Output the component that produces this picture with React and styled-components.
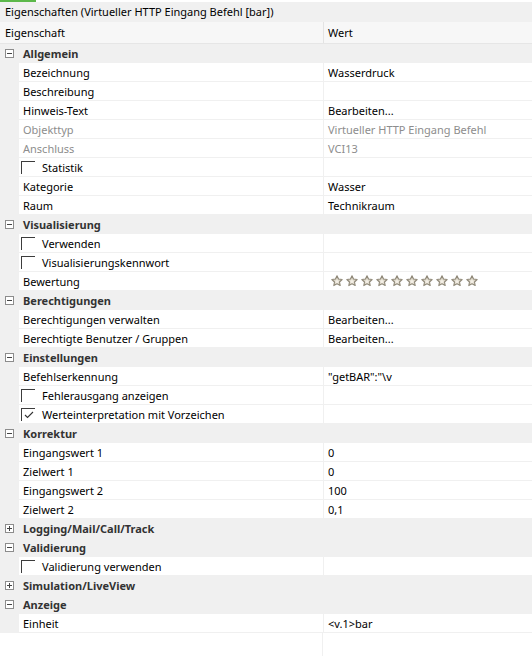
import React from "react";
import styled, { createGlobalStyle } from "styled-components";

const GlobalStyle = createGlobalStyle`
  html, body {
    margin: 0;
    padding: 0;
    background: #ffffff;
  }
  body {
    font-family: "Noto Sans", "Open Sans", sans-serif;
    font-size: 11px;
    color: #000;
  }
`;

const Panel = styled.div`
  width: 532px;
  height: 656px;
  overflow: hidden;
  display: flex;
  flex-direction: column;
  background: #fff;
`;

const Accent = styled.div`
  width: 36px;
  height: 2px;
  background: #5cb84a;
`;

const TitleBar = styled.div`
  height: 20px;
  line-height: 20px;
  padding-left: 5px;
  background: #f0f0f0;
  white-space: nowrap;
`;

const HeaderRow = styled.div`
  display: grid;
  grid-template-columns: 323px 1fr;
  height: 21px;
  background: #f7f7f7;
  border-bottom: 1px solid #e6e6e6;
`;

const HeaderCell = styled.div`
  line-height: 21px;
  padding-left: ${(p) => (p.$value ? "4px" : "5px")};
  border-left: ${(p) => (p.$value ? "1px solid #e3e3e3" : "none")};
`;

const Rows = styled.div`
  flex: 1;
  display: flex;
  flex-direction: column;
  background: linear-gradient(to right, transparent 322px, #f0f0f0 322px, #f0f0f0 323px, transparent 323px);
`;

const GroupRow = styled.div`
  display: flex;
  align-items: center;
  height: 19px;
  background: #f0f0f0;
  font-weight: 700;
  color: #333;
`;

const Expander = styled.span`
  box-sizing: border-box;
  width: 9px;
  height: 9px;
  margin: 0 9px 0 5px;
  border: 1px solid #8c8c8c;
  background: #fff;
  position: relative;
  &::before {
    content: "";
    position: absolute;
    left: 1px;
    right: 1px;
    top: 3px;
    height: 1px;
    background: #444;
  }
  &::after {
    content: "";
    display: ${(p) => (p.$collapsed ? "block" : "none")};
    position: absolute;
    top: 1px;
    bottom: 1px;
    left: 3px;
    width: 1px;
    background: #444;
  }
`;

const ItemRow = styled.div`
  display: grid;
  grid-template-columns: 19px 304px 1fr;
  height: 19px;
  color: ${(p) => (p.$disabled ? "#8d8d8d" : "#000")};
`;

const Gutter = styled.div`
  background: #f0f0f0;
`;

const NameCell = styled.div`
  display: flex;
  align-items: center;
  padding-left: 4px;
  background: #fff;
  border-bottom: 1px solid #f0f0f0;
  white-space: nowrap;
`;

const ValueCell = styled.div`
  display: flex;
  align-items: center;
  padding-left: 4px;
  background: #fff;
  border-left: 1px solid #f0f0f0;
  border-bottom: 1px solid #f0f0f0;
  white-space: nowrap;
`;

const Check = styled.span`
  box-sizing: border-box;
  width: 14px;
  height: 13px;
  margin: 0 7px 0 -2px;
  border-top: 1px solid #3c3c3c;
  border-left: 1px solid #3c3c3c;
  display: flex;
  align-items: center;
  justify-content: center;
`;

const Stars = styled.div`
  display: flex;
  gap: 3px;
  padding-left: 3px;
`;

const Star = () => (
  <svg width="12" height="12" viewBox="0 0 24 24">
    <path
      d="M12 1.5l3.1 6.6 7.2.9-5.3 5 1.4 7.1L12 17.6l-6.4 3.5 1.4-7.1-5.3-5 7.2-.9z"
      fill="#d9d3c4"
      stroke="#8f8878"
      strokeWidth="2.2"
      strokeLinejoin="round"
    />
    <path d="M12 8l1.5 3.2 3.4.4-2.5 2.4.7 3.4L12 15.7l-3.1 1.7.7-3.4-2.5-2.4 3.4-.4z" fill="#f3efe6" />
  </svg>
);

const Tick = () => (
  <svg width="10" height="8" viewBox="0 0 10 8">
    <path d="M1 4l2.5 2.5L9 1" fill="none" stroke="#333" strokeWidth="1.1" />
  </svg>
);

const groups = [
  {
    title: "Allgemein",
    items: [
      { name: "Bezeichnung", value: "Wasserdruck" },
      { name: "Beschreibung", value: "" },
      { name: "Hinweis-Text", value: "Bearbeiten..." },
      { name: "Objekttyp", value: "Virtueller HTTP Eingang Befehl", disabled: true },
      { name: "Anschluss", value: "VCI13", disabled: true },
      { name: "Statistik", check: "off" },
      { name: "Kategorie", value: "Wasser" },
      { name: "Raum", value: "Technikraum" },
    ],
  },
  {
    title: "Visualisierung",
    items: [
      { name: "Verwenden", check: "off" },
      { name: "Visualisierungskennwort", check: "off" },
      { name: "Bewertung", stars: 10 },
    ],
  },
  {
    title: "Berechtigungen",
    items: [
      { name: "Berechtigungen verwalten", value: "Bearbeiten..." },
      { name: "Berechtigte Benutzer / Gruppen", value: "Bearbeiten..." },
    ],
  },
  {
    title: "Einstellungen",
    items: [
      { name: "Befehlserkennung", value: '"getBAR":"\\v' },
      { name: "Fehlerausgang anzeigen", check: "off" },
      { name: "Werteinterpretation mit Vorzeichen", check: "on" },
    ],
  },
  {
    title: "Korrektur",
    items: [
      { name: "Eingangswert 1", value: "0" },
      { name: "Zielwert 1", value: "0" },
      { name: "Eingangswert 2", value: "100" },
      { name: "Zielwert 2", value: "0,1" },
    ],
  },
  { title: "Logging/Mail/Call/Track", collapsed: true, items: [] },
  {
    title: "Validierung",
    items: [{ name: "Validierung verwenden", check: "off" }],
  },
  { title: "Simulation/LiveView", collapsed: true, items: [] },
  {
    title: "Anzeige",
    items: [{ name: "Einheit", value: "<v.1>bar" }],
  },
];

const App = () => {
  return (
    <Panel>
      <GlobalStyle />
      <Accent />
      <TitleBar>Eigenschaften (Virtueller HTTP Eingang Befehl [bar])</TitleBar>
      <HeaderRow>
        <HeaderCell>Eigenschaft</HeaderCell>
        <HeaderCell $value>Wert</HeaderCell>
      </HeaderRow>
      <Rows>
        {groups.map((g) => (
          <React.Fragment key={g.title}>
            <GroupRow>
              <Expander $collapsed={g.collapsed} />
              {g.title}
            </GroupRow>
            {g.items.map((it) => (
              <ItemRow key={it.name} $disabled={it.disabled}>
                <Gutter />
                <NameCell>
                  {it.check && <Check>{it.check === "on" && <Tick />}</Check>}
                  {it.name}
                </NameCell>
                <ValueCell>
                  {it.stars ? (
                    <Stars>
                      {Array.from({ length: it.stars }).map((_, i) => (
                        <Star key={i} />
                      ))}
                    </Stars>
                  ) : (
                    it.value
                  )}
                </ValueCell>
              </ItemRow>
            ))}
          </React.Fragment>
        ))}
      </Rows>
    </Panel>
  );
};

export default App;
